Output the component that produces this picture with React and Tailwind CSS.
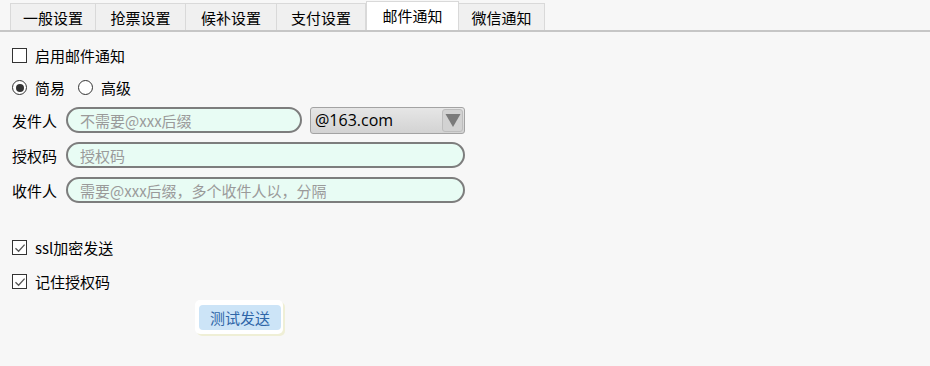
import { useState } from 'react'

// Settings window, "邮件通知" tab selected.
const TABS = [
  { label: '一般设置', w: 'w-[86px]' },
  { label: '抢票设置', w: 'w-[90px]' },
  { label: '候补设置', w: 'w-[91px]' },
  { label: '支付设置', w: 'w-[89px]' },
  { label: '邮件通知', w: 'w-[93px]' },
  { label: '微信通知', w: 'w-[86px]' },
]

function Check({ checked, onChange, children, className = '' }) {
  return (
    <label className={`flex items-center h-[21px] cursor-default ${className}`} onClick={onChange}>
      <span className="w-[15px] h-[15px] border border-[#333] bg-white flex items-center justify-center shrink-0">
        {checked && (
          <svg width="12" height="12" viewBox="0 0 12 12" fill="none">
            <path d="M1.5 6.2 L4.6 9.2 L10.6 2.6" stroke="#555" strokeWidth="1.3" />
          </svg>
        )}
      </span>
      <span className="ml-[8px] leading-[21px]">{children}</span>
    </label>
  )
}

function Radio({ checked, onClick, children }) {
  return (
    <label className="flex items-center cursor-default" onClick={onClick}>
      <span className="w-[15px] h-[15px] rounded-full border border-[#333] bg-white flex items-center justify-center shrink-0">
        {checked && <span className="w-[8px] h-[8px] rounded-full bg-[#333]" />}
      </span>
      <span className="ml-[8px] leading-[21px]">{children}</span>
    </label>
  )
}

function Field({ label, placeholder, className = 'w-[399px]' }) {
  return (
    <input
      placeholder={placeholder}
      aria-label={label}
      className={`h-[26px] rounded-full border-2 border-[#7d7d7d] bg-[#e8fcf4] pl-[12px] text-[15px] leading-[22px] outline-none placeholder:text-[#9a9a9a] ${className}`}
    />
  )
}

export default function App() {
  const [tab, setTab] = useState(4)
  const [enabled, setEnabled] = useState(false)
  const [mode, setMode] = useState('simple')
  const [ssl, setSsl] = useState(true)
  const [remember, setRemember] = useState(true)

  return (
    <div className="w-[930px] h-[366px] bg-[#f7f7f7] text-black text-[15px] font-['Noto_Sans_CJK_SC','Microsoft_YaHei',sans-serif] overflow-hidden">
      {/* tab strip */}
      <div className="flex items-end h-[30px] pl-[10px]">
        {TABS.map((t, i) => (
          <button
            key={t.label}
            onClick={() => setTab(i)}
            className={`${t.w} flex items-center justify-center border border-[#d9d9d9] leading-none ${
              tab === i ? 'h-[29px] bg-white border-b-0 pb-[1px]' : 'h-[27px] bg-[#f0f0f0] border-b-0 border-l-0 first:border-l pt-[1px]'
            }`}
          >
            {t.label}
          </button>
        ))}
      </div>
      <div className="h-[2px] bg-[#c6c6c6]" />

      <div className="pl-[12px]">
        <Check checked={enabled} onChange={() => setEnabled(v => !v)} className="mt-[13px]">启用邮件通知</Check>

        <div className="flex items-center gap-[13px] h-[21px] mt-[11px]">
          <Radio checked={mode === 'simple'} onClick={() => setMode('simple')}>简易</Radio>
          <Radio checked={mode === 'advanced'} onClick={() => setMode('advanced')}>高级</Radio>
        </div>

        <div className="mt-[9px] flex flex-col gap-[9px]">
          <div className="flex items-center h-[26px]">
            <span className="w-[54px] leading-[21px]">发件人</span>
            <Field label="发件人" placeholder="不需要@xxx后缀" className="w-[236px]" />
            <div className="ml-[8px] w-[155px] h-[27px] rounded-[3px] border border-[#a3a3a3] bg-gradient-to-b from-[#e6e6e6] to-[#d3d3d3] flex items-center justify-between pl-[4px] pr-[1px]">
              <span className="text-[16px] leading-none font-['Open_Sans','Noto_Sans_CJK_SC',sans-serif]">@163.com</span>
              <span className="w-[21px] h-[23px] rounded-[3px] border border-[#bdbdbd] bg-[#d2d2d2] flex items-center justify-center">
                <svg width="16" height="15" viewBox="0 0 16 15">
                  <path d="M0.5 1 H15.5 L8 14 Z" fill="#7a7a7a" />
                </svg>
              </span>
            </div>
          </div>
          <div className="flex items-center h-[26px]">
            <span className="w-[54px] leading-[21px]">授权码</span>
            <Field label="授权码" placeholder="授权码" />
          </div>
          <div className="flex items-center h-[26px]">
            <span className="w-[54px] leading-[21px]">收件人</span>
            <Field label="收件人" placeholder="需要@xxx后缀，多个收件人以，分隔" />
          </div>
        </div>

        <Check checked={ssl} onChange={() => setSsl(v => !v)} className="mt-[34px]">ssl加密发送</Check>
        <Check checked={remember} onChange={() => setRemember(v => !v)} className="mt-[13px]">记住授权码</Check>

        <div className="mt-[8px] ml-[183px] w-[88px] h-[34px] rounded-[5px] bg-white shadow-[2px_2px_0_#efefd6] pl-[4px] pt-[5px]">
          <button className="w-[82px] h-[25px] rounded-[4px] bg-[#cce4f7] text-[#2f66a8] leading-none">
            测试发送
          </button>
        </div>
      </div>
    </div>
  )
}
